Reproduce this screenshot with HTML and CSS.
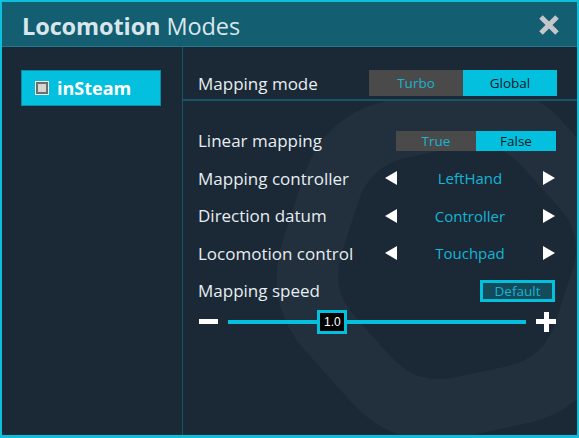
FILE: index.html
```html
<!DOCTYPE html>
<html lang="en">
<head>
    <meta charset="UTF-8">
    <title>Locomotion Modes</title>
    <link rel="stylesheet" href="styles.css">
</head>
<body>
    <div class="window">
        <header class="titlebar">
            <h1><b>Locomotion</b> Modes</h1>
            <a class="close" href="javascript:void(0);">
                <svg width="22" height="22" viewBox="0 0 22 22">
                    <path d="M3 3L19 19M19 3L3 19" stroke="#c3c7c9" stroke-width="5"/>
                </svg>
            </a>
        </header>
        <div class="main">
            <aside class="sidebar">
                <a class="tab active" href="javascript:void(0);">
                    <span class="check"></span>inSteam
                </a>
            </aside>
            <section class="panel">
                <div class="row head">
                    <span class="label">Mapping mode</span>
                    <div class="toggle big">
                        <span>Turbo</span>
                        <span class="on">Global</span>
                    </div>
                </div>
                <div class="settings">
                    <!-- faint hexagon emblem behind the options -->
                    <svg class="mark" viewBox="183 101 394 334" preserveAspectRatio="none">
                        <defs>
                            <path id="hex" d="M85,26 L65,60.6 Q50,86.6 20,86.6 L-20,86.6 Q-50,86.6 -65,60.6 L-85,26 Q-100,0 -85,-26 L-65,-60.6 Q-50,-86.6 -20,-86.6 L20,-86.6 Q50,-86.6 65,-60.6 L85,-26 Q100,0 85,26 Z"/>
                        </defs>
                        <use href="#hex" fill="none" stroke="#222f3c" stroke-width="32" vector-effect="non-scaling-stroke"
                             transform="translate(457 262) rotate(108) scale(1.68)"/>
                        <use href="#hex" fill="none" stroke="#222f3c" stroke-width="8" vector-effect="non-scaling-stroke"
                             transform="translate(457 262) rotate(108) scale(1.36)"/>
                    </svg>
                    <div class="row">
                        <span class="label">Linear mapping</span>
                        <div class="toggle">
                            <span>True</span>
                            <span class="on">False</span>
                        </div>
                    </div>
                    <div class="row">
                        <span class="label">Mapping controller</span>
                        <div class="selector">
                            <i class="arrow left"></i>
                            <span class="value">LeftHand</span>
                            <i class="arrow right"></i>
                        </div>
                    </div>
                    <div class="row">
                        <span class="label">Direction datum</span>
                        <div class="selector">
                            <i class="arrow left"></i>
                            <span class="value">Controller</span>
                            <i class="arrow right"></i>
                        </div>
                    </div>
                    <div class="row">
                        <span class="label">Locomotion control</span>
                        <div class="selector">
                            <i class="arrow left"></i>
                            <span class="value">Touchpad</span>
                            <i class="arrow right"></i>
                        </div>
                    </div>
                    <div class="row">
                        <span class="label">Mapping speed</span>
                        <button class="default">Default</button>
                    </div>
                    <div class="slider">
                        <span class="minus"></span>
                        <div class="track">
                            <span class="thumb" style="left: 30%;">1.0</span>
                        </div>
                        <span class="plus"></span>
                    </div>
                </div>
            </section>
        </div>
    </div>
</body>
</html>
```

FILE: styles.css
```css
*{
    margin:0;
    padding:0;
    box-sizing: border-box;
}
a{
    text-decoration: none;
}
body{
    background-color: #1b2835;
    font-family: "Open Sans", "Noto Sans", sans-serif;
    color: #e4ecf0;
}
.window{
    width: 579px;
    height: 438px;
    border: 2px solid #0cbfdc;
    border-bottom-width: 3px;
    display: flex;
    flex-direction: column;
    background-color: #1b2835;
}
.titlebar{
    height: 45px;
    flex: none;
    background-color: #135e70;
    border-bottom: 1px solid #22788a;
    display: flex;
    align-items: center;
    justify-content: space-between;
    padding: 4px 17px 0 20px;
}
.titlebar h1{
    font-size: 23.5px;
    font-weight: normal;
    color: #d9e7ed;
    letter-spacing: -0.1px;
}
.titlebar h1 b{
    font-weight: bold;
}
.close{
    display: block;
    width: 22px;
    height: 22px;
    margin-top: -2px;
}
.close svg{
    display: block;
}
.main{
    flex: 1;
    display: flex;
}
.sidebar{
    width: 181px;
    flex: none;
    border-right: 1px solid #195566;
    padding: 23px 0 0 19px;
}
.tab{
    display: flex;
    align-items: center;
    width: 140px;
    height: 36px;
    padding-left: 13px;
    background-color: #03c0de;
    border: 1px solid #0b8daa;
    color: #ffffff;
    font-size: 18px;
    font-weight: bold;
}
.check{
    width: 14px;
    height: 14px;
    margin-right: 8px;
    border: 1px solid #f2f2f2;
    background-color: #d6d6d6;
    box-shadow: inset 0 0 0 2px #6e6e6e;
}
.panel{
    flex: 1;
    display: flex;
    flex-direction: column;
}
.row{
    display: flex;
    align-items: center;
    justify-content: space-between;
    height: 37.5px;
}
.label{
    font-size: 17px;
    color: #e6eef2;
}
.head{
    height: 54px;
    padding: 22px 20px 2px 15px;
    border-bottom: 2px solid #195566;
}
.toggle{
    display: flex;
    width: 160px;
    height: 20px;
    font-size: 13.5px;
}
.toggle.big{
    width: 188px;
    height: 26px;
}
.toggle span{
    flex: 1;
    display: flex;
    align-items: center;
    justify-content: center;
    background-color: #4a4a4a;
    color: #17b4d4;
}
.toggle span.on{
    background-color: #03c0de;
    color: #0c1b24;
}
.settings{
    position: relative;
    flex: 1;
    padding: 21px 21px 0 15px;
    overflow: hidden;
}
.mark{
    position: absolute;
    left: 0;
    top: 0;
    width: 100%;
    height: 100%;
}
.settings .row, .slider{
    position: relative;
}
.selector{
    display: flex;
    align-items: center;
    width: 171px;
}
.value{
    flex: 1;
    text-align: center;
    font-size: 15px;
    color: #14b5d5;
}
.arrow{
    width: 0;
    height: 0;
    border-top: 7px solid transparent;
    border-bottom: 7px solid transparent;
}
.arrow.left{
    border-right: 12px solid #ffffff;
}
.arrow.right{
    border-left: 12px solid #ffffff;
    margin-right: 1px;
}
.default{
    width: 75px;
    height: 22px;
    margin-right: 1px;
    border: 3px solid #03c0de;
    background-color: #144b5a;
    color: #17b4d4;
    font-family: inherit;
    font-size: 13.5px;
    line-height: 14px;
}
.slider{
    display: flex;
    align-items: center;
    height: 28px;
    margin-top: -2px;
    padding-left: 1px;
    gap: 10px;
}
.minus{
    width: 19px;
    height: 5px;
    background-color: #ffffff;
}
.track{
    position: relative;
    flex: 1;
    height: 4px;
    background-color: #03c0de;
}
.thumb{
    position: absolute;
    top: -10px;
    width: 30px;
    height: 24px;
    border: 3px solid #03c0de;
    background-color: #000000;
    color: #ffffff;
    font-family: "Liberation Sans", sans-serif;
    font-size: 12px;
    line-height: 18px;
    text-align: center;
}
.plus{
    position: relative;
    width: 20px;
    height: 20px;
}
.plus::before, .plus::after{
    content: "";
    position: absolute;
    background-color: #ffffff;
}
.plus::before{
    left: 0;
    top: 7.5px;
    width: 20px;
    height: 5px;
}
.plus::after{
    left: 7.5px;
    top: 0;
    width: 5px;
    height: 20px;
}
```
